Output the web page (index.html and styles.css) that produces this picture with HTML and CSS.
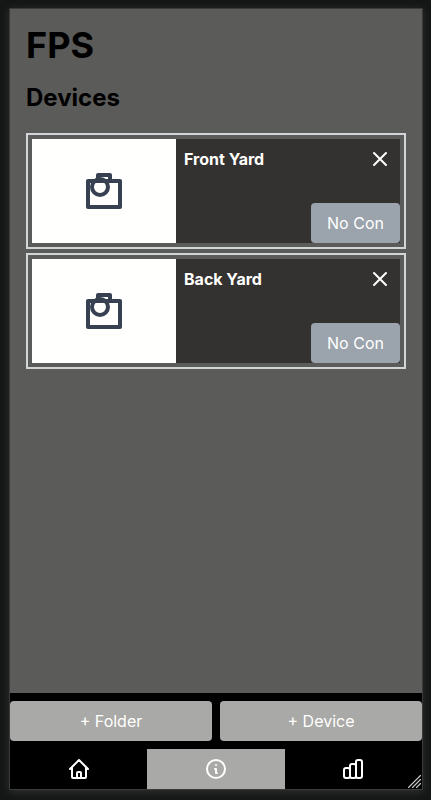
FILE: index.html
```html
<!DOCTYPE html>
<html lang="en">
<head>
<meta charset="utf-8">
<title>FPS</title>
<link rel="stylesheet" href="styles.css">
</head>
<body>
<div class="frame">
  <main class="content">
    <h1>FPS</h1>
    <h2>Devices</h2>
    <div class="devices">
      <article class="device">
        <div class="thumb">
          <svg class="camera" viewBox="0 0 24 24"><rect x="4" y="7" width="16" height="13"/><path d="M9 7V4h6v3"/><circle cx="10" cy="10" r="4"/></svg>
        </div>
        <div class="details">
          <div class="top"><h3>Front Yard</h3><svg class="icon close" viewBox="0 0 24 24"><path d="M6 18L18 6M6 6l12 12"/></svg></div>
          <button class="status">No Con</button>
        </div>
      </article>
      <article class="device">
        <div class="thumb">
          <svg class="camera" viewBox="0 0 24 24"><rect x="4" y="7" width="16" height="13"/><path d="M9 7V4h6v3"/><circle cx="10" cy="10" r="4"/></svg>
        </div>
        <div class="details">
          <div class="top"><h3>Back Yard</h3><svg class="icon close" viewBox="0 0 24 24"><path d="M6 18L18 6M6 6l12 12"/></svg></div>
          <button class="status">No Con</button>
        </div>
      </article>
    </div>
  </main>
  <footer class="bar">
    <div class="actions">
      <button>+ Folder</button>
      <button>+ Device</button>
    </div>
    <nav class="tabs">
      <a><svg class="icon" viewBox="0 0 24 24"><path d="M3 12l2-2m0 0l7-7 7 7M5 10v10a1 1 0 001 1h3m10-11l2 2m-2-2v10a1 1 0 01-1 1h-3m-6 0a1 1 0 001-1v-4a1 1 0 011-1h2a1 1 0 011 1v4a1 1 0 001 1m-6 0h6"/></svg></a>
      <a class="active"><svg class="icon" viewBox="0 0 24 24"><path d="M13 16h-1v-4h-1m1-4h.01M21 12a9 9 0 11-18 0 9 9 0 0118 0z"/></svg></a>
      <a><svg class="icon" viewBox="0 0 24 24"><path d="M9 19v-6a2 2 0 00-2-2H5a2 2 0 00-2 2v6a2 2 0 002 2h2a2 2 0 002-2zm0 0V9a2 2 0 012-2h2a2 2 0 012 2v10m-6 0a2 2 0 002 2h2a2 2 0 002-2m0 0V5a2 2 0 012-2h2a2 2 0 012 2v14a2 2 0 01-2 2h-2a2 2 0 01-2-2z"/></svg></a>
    </nav>
    <svg class="grip" viewBox="0 0 13 13"><path d="M0.5 12.5l12-12M4.5 12.5l8-8M8.5 12.5l4-4"/></svg>
  </footer>
</div>
</body>
</html>
```
FILE: styles.css
```css
* { box-sizing: border-box; }
body {
  margin: 0;
  height: 800px;
  padding: 8px 8px 10px 9px;
  background: #151716;
  font: 16px/24px Inter, "Liberation Sans", sans-serif;
  overflow: hidden;
}
.frame {
  height: 782px;
  display: flex;
  flex-direction: column;
  border: 1px solid #3a3c3b;
  background: #5b5b59;
  box-shadow: 0 2px 8px #303231;
}
.content { flex: 1; padding: 16px; }
h1, h2, h3 { margin: 0; font-weight: 700; }
h1 { font-size: 36px; line-height: 40px; }
h2 { margin-top: 17px; font-size: 24px; line-height: 32px; }
.devices { display: grid; gap: 4px; margin-top: 19px; }
.device {
  display: flex;
  height: 116px;
  padding: 4px;
  border: 2px solid #d1d5d8;
}
.thumb {
  width: 144px;
  display: flex;
  align-items: center;
  justify-content: center;
  background: #fffffd;
}
svg {
  fill: none;
  stroke-width: 2;
  stroke-linecap: round;
  stroke-linejoin: round;
}
.camera { width: 48px; height: 48px; stroke: #374151; }
.icon { width: 24px; height: 24px; stroke: #fffffd; }
.details {
  flex: 1;
  display: flex;
  flex-direction: column;
  justify-content: space-between;
  background: #343230;
  color: #fffffd;
}
.top { display: flex; justify-content: space-between; padding: 8px 8px 0; }
h3 { font-size: 16px; line-height: 24px; }
button {
  height: 40px;
  padding: 8px 16px;
  border: 0;
  border-radius: 4px;
  background: #a9a9a7;
  color: #fffffd;
  font: inherit;
  font-weight: 370;
}
.status { width: 89px; align-self: flex-end; background: #9ba3ad; }
.bar { position: relative; background: #000; }
.actions { display: grid; grid-template-columns: 1fr 1fr; gap: 8px; padding: 8px 0; }
.tabs { display: grid; grid-template-columns: repeat(3, 1fr); height: 40px; }
.tabs a { display: flex; align-items: center; justify-content: center; }
.tabs .active { background: #a9a9a7; }
.grip {
  position: absolute;
  right: 1px;
  bottom: 1px;
  width: 13px;
  height: 13px;
  stroke: #c8c8c6;
  stroke-width: 1.1;
}
```
